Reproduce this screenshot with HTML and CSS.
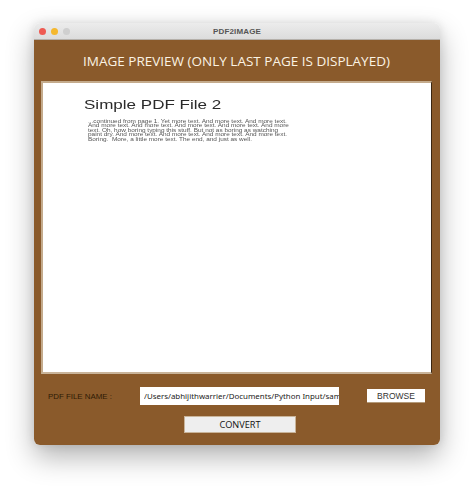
FILE: index.html
```html
<!DOCTYPE html>
<html lang="en">
<head>
<meta charset="utf-8">
<title>PDF2IMAGE</title>
<link rel="stylesheet" href="styles.css">
</head>
<body>
<div class="window">
  <header class="titlebar">
    <div class="lights">
      <span class="light red"></span>
      <span class="light yellow"></span>
      <span class="light grey"></span>
    </div>
    <div class="title">PDF2IMAGE</div>
  </header>
  <main class="content">
    <h1 class="heading">IMAGE PREVIEW (ONLY LAST PAGE IS DISPLAYED)</h1>
    <section class="preview">
      <div class="doc">
        <h2 class="doc-title">Simple PDF File 2</h2>
        <p class="doc-text">...continued from page 1. Yet more text. And more text. And more text.<br>And more text. And more text. And more text. And more text. And more<br>text. Oh, how boring typing this stuff. But not as boring as watching<br>paint dry. And more text. And more text. And more text. And more text.<br>Boring.  More, a little more text. The end, and just as well.</p>
      </div>
    </section>
    <div class="file-row">
      <span class="file-label">PDF FILE NAME :</span>
      <input class="file-input" type="text" readonly value="/Users/abhijithwarrier/Documents/Python Input/sample.pdf">
      <button class="browse">BROWSE</button>
    </div>
    <div class="convert-row">
      <button class="convert">CONVERT</button>
    </div>
  </main>
</div>
</body>
</html>
```
FILE: styles.css
```css
* { box-sizing: border-box; }
html, body { height: 100%; }
body {
  margin: 0;
  padding: 23px 34px 0;
  background: #fff;
  overflow: hidden;
  font-family: "Liberation Sans", Arial, sans-serif;
}
.window {
  width: 406px;
  height: 422px;
  border-radius: 6px;
  overflow: hidden;
  display: flex;
  flex-direction: column;
  box-shadow: 0 12px 28px rgba(0, 0, 0, 0.3), 0 0 10px rgba(0, 0, 0, 0.1);
}
.titlebar {
  height: 17px;
  flex: none;
  display: flex;
  align-items: center;
  position: relative;
  background: linear-gradient(#ececec, #dcdcdc);
  border-bottom: 1px solid #b5b0aa;
}
.lights {
  display: flex;
  gap: 5px;
  padding-left: 5px;
}
.light {
  width: 7px;
  height: 7px;
  border-radius: 50%;
}
.red { background: #ee5a52; }
.yellow { background: #f5b82e; }
.grey { background: #cfcfcf; }
.title {
  position: absolute;
  left: 0;
  right: 0;
  text-align: center;
  font-size: 8px;
  font-weight: 700;
  letter-spacing: 0.15px;
  color: #555;
}
.content {
  flex: 1;
  background: #8a5a2b;
  display: flex;
  flex-direction: column;
  padding: 0 8px 0 7px;
}
.heading {
  margin: 0;
  height: 41px;
  display: flex;
  align-items: center;
  justify-content: center;
  font-family: "Open Sans", sans-serif;
  font-size: 13.5px;
  font-weight: 500;
  color: #fbf3e4;
  white-space: nowrap;
}
.preview {
  height: 293px;
  background: #fff;
  border-style: solid;
  border-width: 2px 1px 2px 2px;
  border-color: #c4ab8c #3b2611 #c9b49a #c4ab8c;
}
.doc {
  padding: 14px 0 0 41px;
  filter: blur(0.3px);
}
.doc-title {
  margin: 0;
  font-size: 13px;
  font-weight: 400;
  line-height: 16px;
  color: #2a2a2a;
  transform: scaleX(1.31);
  transform-origin: left center;
}
.doc-text {
  margin: 7px 0 0 4px;
  font-size: 4.6px;
  line-height: 4.4px;
  white-space: pre;
  color: #555;
  transform: scaleX(1.4);
  transform-origin: left center;
}
.file-row {
  margin-top: 13px;
  display: flex;
  align-items: center;
  height: 18px;
}
.file-label {
  width: 92px;
  margin-left: 7px;
  font-size: 7.9px;
  color: #2e1a05;
}
.file-input {
  width: 199px;
  height: 18px;
  margin: 0;
  border: 0;
  outline: 0;
  background: #fff;
  color: #222;
  font-family: "Noto Sans", sans-serif;
  font-size: 7.9px;
  padding: 0 0 0 4px;
}
.browse {
  margin: 0 0 0 28px;
  width: 58px;
  height: 14px;
  padding: 0;
  border: 0;
  border-bottom: 1px solid #b49a7a;
  background: #fff;
  color: #333;
  font-family: "Liberation Sans", sans-serif;
  font-size: 8.5px;
}
.convert-row {
  margin-top: 11px;
  display: flex;
  padding-left: 143px;
}
.convert {
  width: 112px;
  height: 17px;
  padding: 0;
  background: #eeeeee;
  border: 1px solid #c9b49a;
  color: #111;
  font-family: "Open Sans", sans-serif;
  font-size: 9.2px;
  font-weight: 500;
}
```
